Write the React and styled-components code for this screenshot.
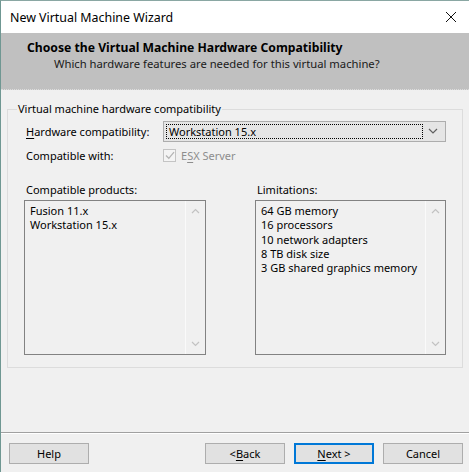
import styled, { createGlobalStyle } from 'styled-components';

const Global = createGlobalStyle`
  html, body { margin: 0; padding: 0; background: #f0f0f0; }
  body { font-family: "Noto Sans", "Open Sans", sans-serif; font-size: 11px; color: #000; }
`;

const Window = styled.div`
  width: 469px;
  height: 472px;
  box-sizing: border-box;
  border-left: 1px solid #6f9792;
  border-top: 1px solid #8aa7a3;
  background: #f0f0f0;
  display: flex;
  flex-direction: column;
  overflow: hidden;
`;

const TitleBar = styled.div`
  height: 32px;
  background: #fff;
  display: flex;
  align-items: center;
  justify-content: space-between;
  padding: 0 9px 0 9px;
  font-size: 12.4px;
`;

const Close = styled.svg`
  width: 12px;
  height: 12px;
  margin-right: 3px;
`;

const Header = styled.div`
  height: 57px;
  background: #c0c0c0;
  border-bottom: 1px dotted #dcdcdc;
  padding: 7px 0 0 26px;
  box-sizing: border-box;
`;

const HeaderTitle = styled.div`
  font-weight: bold;
  font-size: 12.2px;
  line-height: 16px;
`;

const HeaderSub = styled.div`
  padding-left: 27px;
  line-height: 15px;
  font-size: 11.25px;
  color: #1a1a1a;
`;

const Body = styled.div`
  flex: 1;
  padding: 12px 6px 0 6px;
  display: flex;
  flex-direction: column;
`;

const Group = styled.fieldset`
  margin: 0;
  height: 266px;
  box-sizing: border-box;
  border: 1px solid #dcdcdc;
  border-radius: 0;
  padding: 3px 16px 0 16px;
`;

const Legend = styled.legend`
  padding: 0 1px;
  margin-left: -7px;
  line-height: 14px;
  color: #000;
`;

const FormGrid = styled.div`
  display: grid;
  grid-template-columns: 137px 1fr;
  grid-auto-rows: 24px;
  align-items: center;
  padding-left: 2px;
`;

const Label = styled.span``;

const Acc = styled.span`
  text-decoration: underline;
  text-underline-offset: 2px;
`;

const Select = styled.div`
  height: 21px;
  box-sizing: border-box;
  border: 1px solid #adadad;
  background: #e5e5e5;
  display: flex;
  align-items: center;
  padding: 2px;
`;

const Focus = styled.div`
  flex: 1;
  height: 100%;
  box-sizing: border-box;
  border: 1px dotted #000;
  display: flex;
  align-items: center;
  padding-left: 2px;
`;

const Chevron = styled.svg`
  width: 20px;
  height: 10px;
  flex: none;
`;

const CheckRow = styled.div`
  display: flex;
  align-items: center;
  gap: 5px;
  color: #8d8d8d;
`;

const Box = styled.div`
  width: 11px;
  height: 11px;
  border: 1px solid #c4c4c4;
  background: #f4f4f4;
  display: flex;
  align-items: center;
  justify-content: center;
`;

const Lists = styled.div`
  display: flex;
  justify-content: space-between;
  margin-top: 16px;
`;

const ListCol = styled.div`
  width: ${p => p.$w}px;
`;

const ListLabel = styled.div`
  padding-left: 2px;
  line-height: 14px;
  margin-bottom: 3px;
`;

const ListBox = styled.div`
  height: 155px;
  box-sizing: border-box;
  border: 1px solid #828282;
  display: flex;
`;

const Items = styled.div`
  flex: 1;
  padding: 3px 5px;
  line-height: 14.3px;
`;

const Scroll = styled.div`
  width: 19px;
  border-left: 1px solid #fafafa;
  display: flex;
  flex-direction: column;
  justify-content: space-between;
  align-items: center;
  padding: 7px 0;
`;

const Separator = styled.div`
  margin: auto -6px 0 -6px;
  border-top: 1px solid #a0a0a0;
  border-bottom: 1px solid #fff;
`;

const Footer = styled.div`
  display: flex;
  align-items: center;
  padding: 9px 6px 8px 8px;
  gap: 9px;
`;

const Button = styled.div`
  width: 80px;
  height: 21px;
  box-sizing: border-box;
  border: 1px solid ${p => (p.$default ? '#0078d7' : '#adadad')};
  box-shadow: ${p => (p.$default ? 'inset 0 0 0 1px #0078d7' : 'none')};
  background: #e1e1e1;
  display: flex;
  align-items: center;
  justify-content: center;
  margin-left: ${p => (p.$push ? 'auto' : '0')};
`;

const Arrow = ({ up }) => (
  <svg width="9" height="6" viewBox="0 0 9 6">
    <path d={up ? 'M1 5 L4.5 1.5 L8 5' : 'M1 1 L4.5 4.5 L8 1'} fill="none" stroke="#c2c2c2" strokeWidth="1.2" />
  </svg>
);

const List = ({ items }) => (
  <ListBox>
    <Items>
      {items.map(t => (
        <div key={t}>{t}</div>
      ))}
    </Items>
    <Scroll>
      <Arrow up />
      <Arrow />
    </Scroll>
  </ListBox>
);

export default function App() {
  return (
    <Window>
      <Global />
      <TitleBar>
        <span>New Virtual Machine Wizard</span>
        <Close viewBox="0 0 12 12">
          <path d="M1 1 L11 11 M11 1 L1 11" stroke="#111" strokeWidth="1" />
        </Close>
      </TitleBar>
      <Header>
        <HeaderTitle>Choose the Virtual Machine Hardware Compatibility</HeaderTitle>
        <HeaderSub>Which hardware features are needed for this virtual machine?</HeaderSub>
      </Header>
      <Body>
        <Group>
          <Legend>Virtual machine hardware compatibility</Legend>
          <FormGrid>
            <Label>
              <Acc>H</Acc>ardware compatibility:
            </Label>
            <Select>
              <Focus>Workstation 15.x</Focus>
              <Chevron viewBox="0 0 20 10">
                <path d="M6 3 L10 7 L14 3" fill="none" stroke="#606060" strokeWidth="1.2" />
              </Chevron>
            </Select>
            <Label>Compatible with:</Label>
            <CheckRow>
              <Box>
                <svg width="10" height="9" viewBox="0 0 10 9">
                  <path d="M1 4.5 L3.8 7.3 L9 1.2" fill="none" stroke="#b4b4b4" strokeWidth="1.3" />
                </svg>
              </Box>
              <span>
                E<Acc>S</Acc>X Server
              </span>
            </CheckRow>
          </FormGrid>
          <Lists>
            <ListCol $w={182}>
              <ListLabel>Compatible products:</ListLabel>
              <List items={['Fusion 11.x', 'Workstation 15.x']} />
            </ListCol>
            <ListCol $w={191}>
              <ListLabel>Limitations:</ListLabel>
              <List
                items={[
                  '64 GB memory',
                  '16 processors',
                  '10 network adapters',
                  '8 TB disk size',
                  '3 GB shared graphics memory',
                ]}
              />
            </ListCol>
          </Lists>
        </Group>
        <Separator />
      </Body>
      <Footer>
        <Button>Help</Button>
        <Button $push>
          &lt; <Acc>B</Acc>ack
        </Button>
        <Button $default>
          <Acc>N</Acc>ext &gt;
        </Button>
        <Button>Cancel</Button>
      </Footer>
    </Window>
  );
}
